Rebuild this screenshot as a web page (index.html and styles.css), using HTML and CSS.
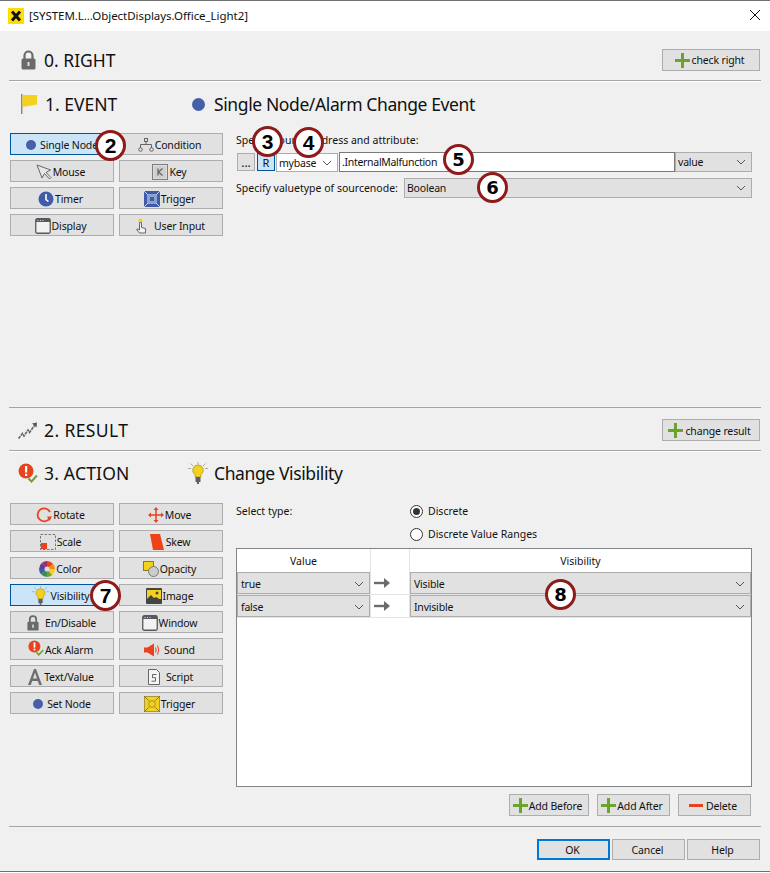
FILE: index.html
```html
<!DOCTYPE html>
<html lang="en">
<head>
<meta charset="utf-8">
<title>[SYSTEM.L...ObjectDisplays.Office_Light2]</title>
<link rel="stylesheet" href="styles.css">
</head>
<body>
<svg class="defs" width="0" height="0" aria-hidden="true">
  <symbol id="plus" viewBox="0 0 15 15"><path d="M7.500 0v15M0 7.500h15" stroke="#6aa32d" stroke-width="3" fill="none"/></symbol>
  <symbol id="chev" viewBox="0 0 10 6"><path d="M1 1l4 4 4-4" stroke="#555" stroke-width="1" fill="none"/></symbol>
  <symbol id="lock" viewBox="0 0 15 20"><path d="M3.500 9V5.500a4 4 0 0 1 8 0V9" stroke="#6a6a6a" stroke-width="2.200" fill="none"/><rect x="0.500" y="8.500" width="14" height="11" rx="1.500" fill="#6a6a6a"/><rect x="6.500" y="12" width="2" height="4" fill="#ddd"/></symbol>
  <symbol id="bulb" viewBox="0 0 20 22"><path d="M10 0v2.500M2.500 1.500l2.500 2.500M17.500 1.500l-2.500 2.500M0 6.500h3M20 6.500h-3" stroke="#a8a8a8" stroke-width="1"/><path d="M10 3a5.200 5.200 0 0 0-3 9.500V15h6v-2.500A5.200 5.200 0 0 0 10 3z" fill="#f4d11f" stroke="#a8921a" stroke-width=".7"/><rect x="7.500" y="15" width="5" height="5" fill="#5f5f5f"/><rect x="9" y="20" width="2" height="2" fill="#5f5f5f"/></symbol>
  <symbol id="alarm" viewBox="0 0 20 20"><circle cx="8" cy="8" r="7.500" fill="#e8431f"/><rect x="7" y="3" width="2.200" height="6.500" fill="#fff"/><rect x="7" y="10.800" width="2.200" height="2.200" fill="#fff"/><path d="M10.500 15.500l3 3 5.500-6" stroke="#6aa32d" stroke-width="2" fill="none"/></symbol>
  <symbol id="win" viewBox="0 0 16 16"><rect x=".75" y=".75" width="14.500" height="14.500" rx="1.500" fill="#f2f2f2" stroke="#55585e" stroke-width="1.300"/><rect x="1" y="1" width="14" height="3" fill="#55585e"/><path d="M2.500 2.500h1M5 2.500h1M7.500 2.500h1" stroke="#ddd"/></symbol>
</svg>
<div class="window">
  <header class="titlebar">
    <svg class="app-icon" viewBox="0 0 16 16"><rect width="16" height="16" fill="#ffdd00"/><path d="M4 3.500l8 9M12 3.500l-8 9" stroke="#111" stroke-width="3"/></svg>
    <span class="title">[SYSTEM.L...ObjectDisplays.Office_Light2]</span>
    <svg class="close" viewBox="0 0 10 10"><path d="M0 0l10 10M10 0l-10 10" stroke="#111" stroke-width="1" fill="none"/></svg>
  </header>

  <section class="bar bar-right">
    <svg class="h-icon lock-lg"><use href="#lock"/></svg>
    <h2>0. RIGHT</h2>
    <button class="btn add-btn"><svg class="i-plus"><use href="#plus"/></svg>check right</button>
  </section>

  <section class="event">
    <div class="heading">
      <svg class="h-icon flag" viewBox="0 0 16 20"><rect x="0" y="0" width="1.500" height="20" fill="#8a8a8a"/><path d="M1.500 1h14.500v9.500l-14.500 2.500z" fill="#f4d11f"/></svg>
      <h2 class="h-label">1. EVENT</h2>
      <span class="dot dot-lg"></span>
      <h2 class="sub">Single Node/Alarm Change Event</h2>
    </div>
    <div class="panel">
      <div class="grid-btns">
        <button class="btn on nudge"><span class="dot"></span><span class="gap3">Single Node</span></button>
        <button class="btn"><svg class="i16" viewBox="0 0 16 14"><path d="M8 3.500v3M2.500 10V6.500h11V10" stroke="#666" fill="none"/><rect x="6.500" y=".5" width="3" height="3" fill="none" stroke="#666"/><circle cx="2.500" cy="11.500" r="1.800" fill="none" stroke="#666"/><circle cx="13.500" cy="11.500" r="1.800" fill="none" stroke="#666"/></svg>Condition</button>
        <button class="btn"><svg class="i16" viewBox="0 0 16 16"><path d="M1 1l5 13 2.500-4.500L13.500 15l1.500-1.500-5-5L14.500 6z" fill="#e8e8e8" stroke="#666"/></svg>Mouse</button>
        <button class="btn"><svg class="i16" viewBox="0 0 16 16"><rect x=".5" y=".5" width="15" height="15" fill="#ddd" stroke="#7d7d7d" stroke-width="1"/><rect x="2" y="2" width="12" height="12" fill="#cfcfcf"/><path d="M6 4.500v7M10.500 4.500L6.500 8l4 3.500" stroke="#666" stroke-width="1.300" fill="none"/></svg>Key</button>
        <button class="btn"><svg class="i16" viewBox="0 0 16 16"><circle cx="8" cy="8" r="7.500" fill="#3f5ca8"/><path d="M8 3v5.500l2.500 2" stroke="#fff" stroke-width="1.600" fill="none"/></svg>Timer</button>
        <button class="btn"><svg class="i16" viewBox="0 0 16 16"><rect width="16" height="16" fill="#3f5ca8"/><rect x="3" y="3" width="10" height="10" fill="#8ea0cf"/><rect x="6" y="6" width="4" height="4" fill="#3f5ca8"/><path d="M0 0l4 4M16 0l-4 4M0 16l4-4M16 16l-4-4" stroke="#c8d2ea"/></svg>Trigger</button>
        <button class="btn"><svg class="i16"><use href="#win"/></svg>Display</button>
        <button class="btn"><svg class="i16 gap-r" viewBox="0 0 16 16"><circle cx="6.500" cy="2.500" r="2" fill="#f4d11f"/><path d="M5.500 4.500h2v5l4 1v4.500h-6l-3-3.500 1.500-.5 1.500 1z" fill="#f2f2f2" stroke="#666"/></svg>User Input</button>
      </div>
      <div class="form">
        <div class="label">Specify source address and attribute:</div>
        <div class="addr">
          <button class="mini">...</button>
          <button class="mini mini-r">R</button>
          <div class="sel sel-white base"><span>mybase</span><svg class="chev"><use href="#chev"/></svg></div>
          <div class="field">.InternalMalfunction</div>
          <div class="sel attr"><span>value</span><svg class="chev"><use href="#chev"/></svg></div>
        </div>
        <div class="vtype">
          <span class="label">Specify valuetype of sourcenode:</span>
          <div class="sel grow"><span>Boolean</span><svg class="chev"><use href="#chev"/></svg></div>
        </div>
      </div>
    </div>
  </section>

  <section class="bar bar-result">
    <svg class="h-icon chart" viewBox="0 0 20 17"><path d="M0.500 16.500l4-5 1.500 2.500 4-6 1.500 2.500 5-7" stroke="#666" stroke-width="1.600" fill="none" stroke-dasharray="3 .8"/><path d="M14 1.500l5-1-.5 5z" fill="#555"/></svg>
    <h2>2. RESULT</h2>
    <button class="btn add-btn"><svg class="i-plus"><use href="#plus"/></svg>change result</button>
  </section>

  <section class="action">
    <div class="heading heading-a">
      <svg class="h-icon alarm"><use href="#alarm"/></svg>
      <h2 class="h-label-a">3. ACTION</h2>
      <svg class="bulb-lg"><use href="#bulb"/></svg>
      <h2 class="sub">Change Visibility</h2>
    </div>
    <div class="panel panel-a">
      <div class="grid-btns">
        <button class="btn"><svg class="i16" viewBox="0 0 16 16"><path d="M13.500 11.500A6.500 6.500 0 1 1 14 5" stroke="#e8431f" stroke-width="1.800" fill="none"/><path d="M11 9.500h5L13.500 14z" fill="#e8431f"/></svg>Rotate</button>
        <button class="btn"><svg class="i16" viewBox="0 0 16 16"><path d="M8 1v14M1 8h14" stroke="#e8431f" stroke-width="1.500"/><path d="M8 0l2.500 3h-5zM8 16l2.500-3h-5zM0 8l3-2.500v5zM16 8l-3-2.500v5z" fill="#e8431f"/></svg>Move</button>
        <button class="btn"><svg class="i16" viewBox="0 0 16 16"><rect x=".5" y=".5" width="15" height="15" fill="none" stroke="#777" stroke-dasharray="2.500 1.500"/><rect x="1" y="9" width="6" height="6" fill="#e8431f"/></svg>Scale</button>
        <button class="btn"><svg class="i16" viewBox="0 0 16 16"><path d="M1 0h10l4 16H4z" fill="#ee4318"/></svg>Skew</button>
        <button class="btn"><svg class="i16" viewBox="0 0 16 16"><path d="M8 8V0A8 8 0 0 1 14 2.700z" fill="#e8431f"/><path d="M8 8l6-5.300A8 8 0 0 1 16 8z" fill="#f08a1d"/><path d="M8 8h8a8 8 0 0 1-3 6.200z" fill="#f4d11f"/><path d="M8 8l5 6.200A8 8 0 0 1 8 16z" fill="#6aa32d"/><path d="M8 8v8a8 8 0 0 1-6-2.700z" fill="#3a8f4f"/><path d="M8 8l-6 5.300A8 8 0 0 1 0 8z" fill="#3f5ca8"/><path d="M8 8H0a8 8 0 0 1 3-6.200z" fill="#5a3f9a"/><path d="M8 8L3 1.800A8 8 0 0 1 8 0z" fill="#a62a5a"/><circle cx="8" cy="8" r="2.500" fill="#ddd"/></svg>Color</button>
        <button class="btn"><svg class="i16" viewBox="0 0 16 16"><rect x=".5" y=".5" width="10" height="9" fill="#f4d11f" stroke="#8a7a20"/><circle cx="10.500" cy="10.500" r="5" fill="#ccc" stroke="#777"/></svg>Opacity</button>
        <button class="btn on"><svg class="i-bulb"><use href="#bulb"/></svg><span class="gap1">Visibility</span></button>
        <button class="btn"><svg class="i16" viewBox="0 0 16 16"><rect width="16" height="16" rx="1" fill="#444"/><rect x="1" y="2" width="14" height="9" fill="#f4d11f"/><circle cx="11" cy="5" r="1.500" fill="#444"/><path d="M1 11l4-4 3 3 2-1 5 3v3H1z" fill="#444"/></svg>Image</button>
        <button class="btn"><svg class="i16 gap-r" viewBox="0 0 15 20"><use href="#lock"/></svg>En/Disable</button>
        <button class="btn"><svg class="i16"><use href="#win"/></svg>Window</button>
        <button class="btn"><svg class="i16 up2"><use href="#alarm"/></svg>Ack Alarm</button>
        <button class="btn"><svg class="i16 gap-r" viewBox="0 0 16 16"><path d="M0 5.500h3.500L10 1.500v13l-6.500-4H0z" fill="#e8431f"/><path d="M11.500 5.500q1.200 2.500 0 5M13.500 3.500q2.400 4.500 0 9" stroke="#e8431f" stroke-width="1" fill="none"/></svg>Sound</button>
        <button class="btn"><svg class="i-a" viewBox="0 0 16 16"><path d="M1 16L7 0h2l6 16h-2.800l-1.400-4H5.200l-1.400 4zM6 9.500h4L8 3.800z" fill="#6f6f6f"/></svg>Text/Value</button>
        <button class="btn"><svg class="i16 gap-r" viewBox="0 0 12 16"><path d="M.5.500h8l3 3v12H.5z" fill="#f5f5f5" stroke="#666"/><path d="M8.500 5.500h-4v3.200h3v3.500h-4" stroke="#666" fill="none"/></svg>Script</button>
        <button class="btn nudge"><span class="dot"></span><span class="gap3">Set Node</span></button>
        <button class="btn"><svg class="i16" viewBox="0 0 16 16"><rect width="16" height="16" fill="#a8963a"/><rect x="1" y="1" width="14" height="14" fill="#f4d11f"/><rect x="4" y="4" width="8" height="8" fill="#c9b02a"/><rect x="6" y="6" width="4" height="4" fill="#f4d11f"/><path d="M0 0l4 4M16 0l-4 4M0 16l4-4M16 16l-4-4" stroke="#8a7a20"/></svg>Trigger</button>
      </div>
      <div class="form form-a">
        <div class="type-row">
          <span class="label">Select type:</span>
          <div class="radios">
            <label class="radio"><span class="rdot checked"></span>Discrete</label>
            <label class="radio"><span class="rdot"></span>Discrete Value Ranges</label>
          </div>
        </div>
        <div class="table">
          <div class="cell head">Value</div><div class="cell cell-mid head"></div><div class="cell head">Visibility</div>
          <div class="cell"><div class="sel tsel"><span>true</span><svg class="chev"><use href="#chev"/></svg></div></div>
          <div class="cell cell-mid"><svg class="arrow" viewBox="0 0 16 10"><path d="M0 5h10" stroke="#6b6b6b" stroke-width="2.400"/><path d="M10 0l6 5-6 5z" fill="#6b6b6b"/></svg></div>
          <div class="cell"><div class="sel tsel"><span>Visible</span><svg class="chev"><use href="#chev"/></svg></div></div>
          <div class="cell"><div class="sel tsel"><span>false</span><svg class="chev"><use href="#chev"/></svg></div></div>
          <div class="cell cell-mid"><svg class="arrow" viewBox="0 0 16 10"><path d="M0 5h10" stroke="#6b6b6b" stroke-width="2.400"/><path d="M10 0l6 5-6 5z" fill="#6b6b6b"/></svg></div>
          <div class="cell"><div class="sel tsel"><span>Invisible</span><svg class="chev"><use href="#chev"/></svg></div></div>
        </div>
        <div class="table-actions">
          <button class="btn w-before"><svg class="i-plus"><use href="#plus"/></svg>Add Before</button>
          <button class="btn w-after"><svg class="i-plus"><use href="#plus"/></svg>Add After</button>
          <button class="btn w-del"><svg class="i-minus" viewBox="0 0 14 3"><rect width="14" height="3" fill="#e8431f"/></svg>Delete</button>
        </div>
      </div>
    </div>
  </section>

  <footer class="footer">
    <button class="btn dlg ok">OK</button>
    <button class="btn dlg">Cancel</button>
    <button class="btn dlg">Help</button>
  </footer>

  <span class="badge narrow b2">2</span>
  <span class="badge narrow b3">3</span>
  <span class="badge narrow b4">4</span>
  <span class="badge wide b5">5</span>
  <span class="badge wide b6">6</span>
  <span class="badge narrow b7">7</span>
  <span class="badge wide b8">8</span>
</div>
</body>
</html>
```

FILE: styles.css
```css
* { box-sizing: border-box; }
html, body { margin: 0; padding: 0; background: #fff; }
.defs { position: absolute; }
.window {
  position: relative;
  width: 770px;
  height: 872px;
  display: flex;
  flex-direction: column;
  background: #f0f0f0;
  border-top: 1px solid #707070;
  border-bottom: 1px solid #707070;
  font-family: "Noto Sans", sans-serif;
  font-size: 10.5px;
  color: #111;
}
.titlebar {
  height: 30px;
  background: #fff;
  display: flex;
  align-items: center;
  padding: 0 10px 1px 8px;
  flex: none;
}
.app-icon { width: 16px; height: 16px; margin-right: 5px; }
.title { font-size: 11.5px; letter-spacing: -.05px; flex: 1; }
.close { width: 10px; height: 10px; margin-bottom: 2px; }

h2 { margin: 0; font-size: 17.5px; font-weight: 400; line-height: 24px; color: #111; }
.sub { letter-spacing: -.39px; }

.bar {
  margin: 0 9px;
  display: flex;
  align-items: center;
  flex: none;
  border-bottom: 1px solid #a5a5a5;
  box-shadow: 0 1px 0 #fff;
}
.bar-right { height: 50px; padding: 8px 1px 0 12px; }
.bar-result { height: 44px; padding: 2px 1px 0 9px; border-top: 1px solid #a5a5a5; }
.bar h2 { flex: 1; }
.bar-result h2 { letter-spacing: .4px; }
.lock-lg { width: 15px; height: 20px; margin-right: 8px; }
.chart { width: 20px; height: 17px; margin-right: 6px; }

.event { height: 326px; flex: none; padding: 0 9px; }
.heading { height: 46px; display: flex; align-items: center; padding-left: 12px; }
.flag { width: 16px; height: 20px; margin-right: 8px; }
.h-label { width: 147px; }
.dot { width: 10px; height: 10px; border-radius: 50%; background: #4560a8; flex: none; }
.dot-lg { width: 13px; height: 13px; margin-right: 9px; }
.panel { display: flex; padding-left: 1px; margin-top: 6px; }
.grid-btns {
  display: grid;
  grid-template-columns: 104px 104px;
  grid-auto-rows: 22px;
  gap: 5px;
  flex: none;
}
.btn {
  height: 22px;
  display: flex;
  align-items: center;
  justify-content: center;
  gap: 1px;
  padding: 1px 3px 0 0;
  background: #e1e1e1;
  border: 1px solid #adadad;
  font: inherit;
  letter-spacing: -.15px;
  color: inherit;
}
.btn.on { background: #cce4f7; border-color: #005499; }
.btn.nudge { padding-right: 0; }
.add-btn { width: 98px; flex: none; gap: 2px; }
.i-plus { width: 15px; height: 15px; flex: none; }
.i-minus { width: 14px; height: 3px; flex: none; margin-right: 2px; }
.i16 { width: 16px; height: 16px; flex: none; }
.i-bulb { width: 17px; height: 19px; flex: none; margin-bottom: 1px; }
.i-a { width: 16px; height: 18px; flex: none; }
.up2 { margin-bottom: 3px; }
.gap-r { margin-right: 3px; }
.gap3 { margin-left: 3px; }
.gap1 { margin-left: 1px; }

.form { width: 516px; flex: none; margin-left: 13px; display: flex; flex-direction: column; }
.label { line-height: 14px; }
.addr { display: flex; align-items: flex-start; margin-top: 5px; height: 20px; }
.mini {
  width: 18px; height: 18px; margin: 1px 2px 0 1px; padding: 0;
  background: #e1e1e1; border: 1px solid #adadad; font: inherit; font-size: 12px; color: inherit;
}
.mini-r { background: #cce4f7; border-color: #005499; margin: 1px 1px 0 0; font-size: 11px; }
.sel {
  height: 20px;
  display: flex;
  align-items: center;
  justify-content: space-between;
  background: #e1e1e1;
  border: 1px solid #adadad;
  padding: 0 5px 0 2px;
  letter-spacing: -.2px;
}
.chev { width: 10px; height: 6px; flex: none; }
.sel-white { background: #fff; }
.base { width: 62px; margin: 1px 1px 0 0; height: 19px; }
.field {
  width: 336px; height: 20px;
  background: #fff;
  border: 1px solid #7a7a7a;
  line-height: 18px;
  padding-left: 2px;
  letter-spacing: -.3px;
}
.attr { width: 77px; }
.vtype { display: flex; align-items: center; margin-top: 6px; }
.vtype .label { width: 168px; flex: none; }
.grow { flex: 1; }

.action { height: 375px; flex: none; padding: 0 9px; }
.heading-a { height: 44px; padding-left: 9px; }
.alarm { width: 20px; height: 20px; margin-right: 6px; }
.h-label-a { width: 144px; letter-spacing: .2px; }
.bulb-lg { width: 20px; height: 22px; margin-right: 6px; flex: none; }
.panel-a { margin-top: 8px; }
.type-row { display: flex; height: 45px; }
.type-row .label { width: 174px; flex: none; margin-top: 1px; }
.radios { display: flex; flex-direction: column; gap: 9px; padding-top: 1px; }
.radio { display: flex; align-items: center; height: 14px; gap: 5px; }
.rdot {
  width: 13px; height: 13px; border-radius: 50%;
  background: #fff; border: 1px solid #333; flex: none;
  display: flex; align-items: center; justify-content: center;
}
.rdot.checked::after { content: ""; width: 7px; height: 7px; border-radius: 50%; background: #333; }
.table {
  width: 516px;
  height: 239px;
  background: #fff;
  border: 1px solid #80858c;
  display: grid;
  grid-template-columns: 133px 40px 1fr;
  grid-template-rows: 23px 23px 23px;
  align-content: start;
}
.cell { border-bottom: 1px solid #e4e4e4; display: flex; align-items: center; min-width: 0; }
.cell-mid { border-left: 1px solid #e4e4e4; border-right: 1px solid #e4e4e4; justify-content: center; }
.head { justify-content: center; border-bottom: 0; }
.tsel { width: 100%; height: 22px; padding: 1px 5px 0 3px; }
.arrow { width: 16px; height: 10px; margin-right: 16px; }
.table-actions { display: flex; justify-content: flex-end; gap: 8px; margin-top: 7px; padding-right: 1px; }
.w-before { width: 80px; }
.w-after { width: 73px; }
.w-del { width: 73px; }

.footer {
  margin: 0 9px;
  padding: 12px 1px 0 0;
  flex: 1;
  display: flex;
  justify-content: flex-end;
  gap: 2px;
  border-top: 1px solid #a5a5a5;
}
.dlg { width: 73px; height: 21px; padding-right: 2px; }
.ok { border: 2px solid #0078d7; }

.badge {
  position: absolute;
  width: 31px;
  height: 31px;
  border-radius: 50%;
  background: #fff;
  border: 3px solid #8e1a1a;
  color: #000;
  display: flex;
  align-items: center;
  justify-content: center;
  font-weight: 700;
}
.narrow { font-family: "Liberation Sans", sans-serif; font-size: 21px; }
.wide { font-family: "DejaVu Sans", sans-serif; font-size: 18px; }
.b2 { left: 95px; top: 129px; }
.b3 { left: 252px; top: 125px; }
.b4 { left: 293px; top: 126px; }
.b5 { left: 443px; top: 143px; }
.b6 { left: 477px; top: 171px; }
.b7 { left: 90px; top: 579px; }
.b8 { left: 545px; top: 578px; }
```
